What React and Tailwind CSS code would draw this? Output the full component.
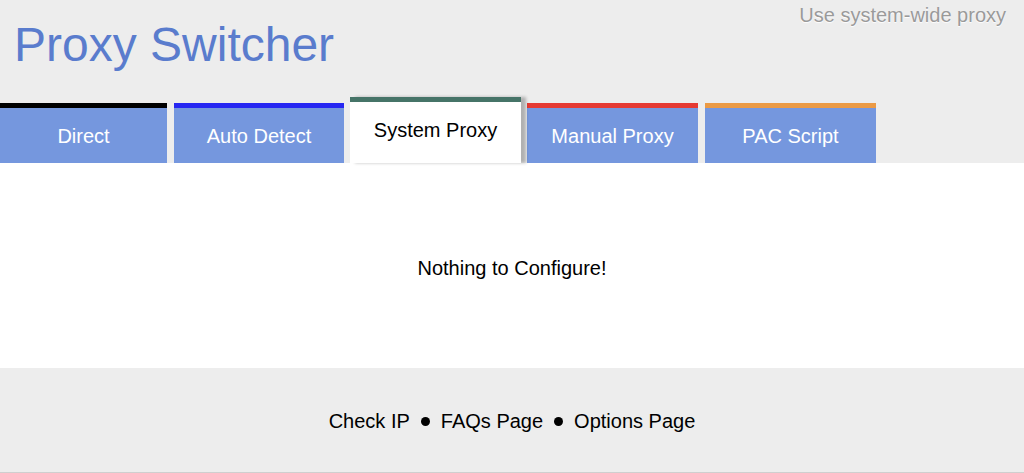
const tabs = [
  { label: 'Direct', bar: 'border-t-black', width: 'w-[167px]' },
  { label: 'Auto Detect', bar: 'border-t-[#2626f2]', width: 'w-[170px]' },
  { label: 'System Proxy', bar: 'border-t-[#467468]', width: 'w-[171px]', active: true },
  { label: 'Manual Proxy', bar: 'border-t-[#e53a33]', width: 'w-[171px]' },
  { label: 'PAC Script', bar: 'border-t-[#eb9a45]', width: 'w-[171px]' },
];

const Tab = ({ label, bar, width, active }) => (
  <div
    className={
      active
        ? `${width} h-[66px] border-t-[5px] ${bar} bg-white text-black flex items-center justify-center pb-[5px] shadow-[5px_0_3px_rgba(0,0,0,0.25)] relative z-10`
        : `${width} h-[60px] border-t-[5px] ${bar} bg-[#7597de] text-white flex items-center justify-center`
    }
  >
    <span className="text-[20px]">{label}</span>
  </div>
);

const Dot = () => <span className="w-[9px] h-[9px] rounded-full bg-black inline-block" />;

export default function App() {
  return (
    <div className="w-[1024px] h-[473px] bg-[#ededed] flex flex-col font-['Liberation_Sans',Arial,sans-serif] overflow-hidden">
      <header className="relative h-[97px] shrink-0">
        <h1 className="absolute left-[14px] top-[21px] text-[48px] leading-none text-[#5a7ccd]">
          Proxy Switcher
        </h1>
        <div className="absolute right-[18px] top-[0px] text-[20px] text-[#9a9a9a] [text-shadow:0_1px_1px_#ffffff]">
          Use system-wide proxy
        </div>
      </header>

      <nav className="flex items-end gap-[6px] h-[66px] shrink-0">
        {tabs.map((t, i) => (
          <div key={t.label} className={i === 1 || i === 4 ? 'ml-[1px]' : ''}>
            <Tab {...t} />
          </div>
        ))}
      </nav>

      <main className="bg-white h-[205px] shrink-0 flex items-center justify-center pt-[4px]">
        <p className="text-[20px] text-black">Nothing to Configure!</p>
      </main>

      <footer className="flex-1 flex items-center justify-center border-b border-[#cfcfcf] pt-[2px]">
        <p className="text-[20px] text-black flex items-center gap-[11px]">
          <span>Check IP</span>
          <Dot />
          <span>FAQs Page</span>
          <Dot />
          <span>Options Page</span>
        </p>
      </footer>
    </div>
  );
}
